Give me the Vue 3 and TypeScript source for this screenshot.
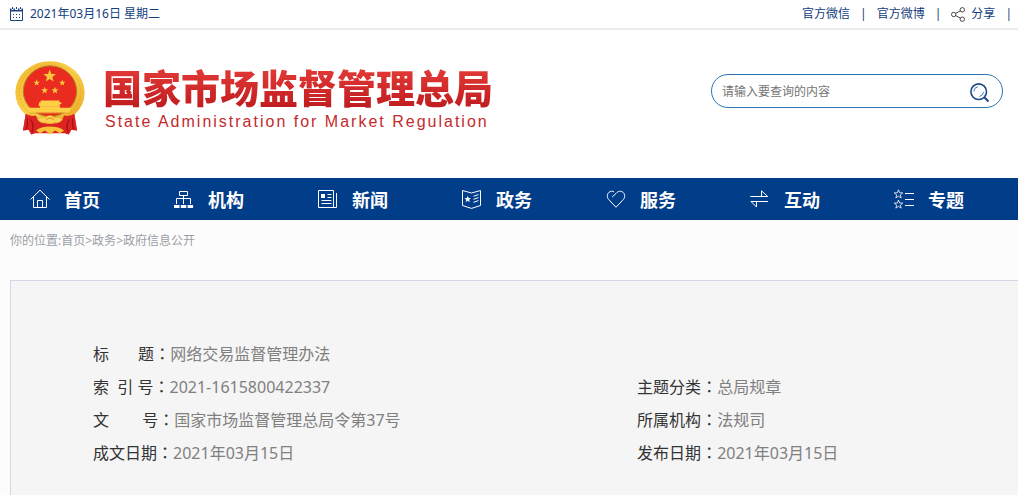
<script setup lang="ts">
import { ref } from 'vue'

interface NavItem {
  label: string
  icon: string
}

interface Field {
  label: string
  value: string
  wide?: boolean
}

const keyword = ref('')

const navItems: NavItem[] = [
  { label: '首页', icon: 'home' },
  { label: '机构', icon: 'org' },
  { label: '新闻', icon: 'news' },
  { label: '政务', icon: 'affairs' },
  { label: '服务', icon: 'service' },
  { label: '互动', icon: 'interact' },
  { label: '专题', icon: 'topics' },
]

const gap = (n: number): string => '\u00a0'.repeat(n)

const fields: Field[] = [
  { label: `标${gap(7)}题`, value: '网络交易监督管理办法', wide: true },
  { label: `索${gap(2)}引${gap(1)}号`, value: '2021-1615800422337' },
  { label: '主题分类', value: '总局规章' },
  { label: `文${gap(8)}号`, value: '国家市场监督管理总局令第37号' },
  { label: '所属机构', value: '法规司' },
  { label: '成文日期', value: '2021年03月15日' },
  { label: '发布日期', value: '2021年03月15日' },
]

function star(cx: number, cy: number, r: number): string {
  const pts: string[] = []
  for (let i = 0; i < 10; i++) {
    const a = -Math.PI / 2 + (i * Math.PI) / 5
    const d = i % 2 ? r * 0.42 : r
    pts.push(`${(cx + d * Math.cos(a)).toFixed(2)},${(cy + d * Math.sin(a)).toFixed(2)}`)
  }
  return pts.join(' ')
}
</script>

<template>
  <div class="page">
    <div class="topbar">
      <div class="date">
        <svg width="14" height="14" viewBox="0 0 14 14" aria-hidden="true">
          <path d="M.5 2.500V13.500H12.500V2.500" fill="none" stroke="#1c4480" />
          <path d="M0 1.500H1.500V3H3.500V1.500H5V3H8V1.500H9.500V3H11.500V1.500H13V4.500H0Z" fill="#1c4480" />
          <path d="M2.500 0V2M6.500 0V2M10.500 0V2" stroke="#1c4480" />
          <path d="M3 7.500H11M3 10.500H11" stroke="#1c4480" stroke-dasharray="1 2" />
        </svg>
        <span>2021年03月16日 星期二</span>
      </div>
      <div class="links">
        <a href="#">官方微信</a>
        <span>|</span>
        <a href="#">官方微博</a>
        <span>|</span>
        <a href="#" class="share">
          <svg width="14" height="15" viewBox="0 0 14 15" fill="none" stroke="#444" aria-hidden="true">
            <circle cx="2.700" cy="7.500" r="2.200" />
            <circle cx="11.300" cy="2.800" r="2.200" />
            <circle cx="11.300" cy="12.200" r="2.200" />
            <path d="M4.700 6.400L9.300 3.900M4.700 8.600L9.300 11.100" />
          </svg>
          分享
        </a>
        <span>|</span>
      </div>
    </div>

    <header class="header">
      <a href="#" class="brand">
        <svg class="emblem" viewBox="45 30 210 225" aria-hidden="true">
          <defs>
            <linearGradient id="gold" x1="0" y1="0" x2="1" y2="1">
              <stop offset="0" stop-color="#f0b62c" />
              <stop offset=".5" stop-color="#fad04a" />
              <stop offset="1" stop-color="#e8a51e" />
            </linearGradient>
          </defs>
          <path d="M77 192L69 240L86 238L94 252L104 248H196L206 252L214 238L231 240L223 192Z" fill="#dc2423" />
          <ellipse cx="150" cy="126" rx="104" ry="94" fill="url(#gold)" />
          <ellipse cx="150" cy="125" rx="92" ry="84" fill="none" stroke="#e6ab2a" stroke-width="3" stroke-dasharray="5 6" />
          <ellipse cx="150" cy="122" rx="80" ry="76" fill="#ea2b20" stroke="#b58324" stroke-width="3" />
          <polygon :points="star(149, 77, 20)" fill="#fac83c" />
          <polygon :points="star(110, 97, 10)" fill="#fac83c" />
          <polygon :points="star(187, 97, 10)" fill="#fac83c" />
          <polygon :points="star(134, 120, 11)" fill="#fac83c" />
          <polygon :points="star(165, 120, 11)" fill="#fac83c" />
          <path d="M122 150H178V155H184V161H179V167H116V161H117V155H122Z" fill="#fdcf45" />
          <path d="M86 172H214L207 187H93Z" fill="#fdcf45" />
          <path d="M120 167H180V173H120Z" fill="#fdcf45" />
          <path d="M88 188H212" stroke="#df9c27" stroke-width="2" />
          <path d="M77 190Q92 199 108 195Q112 212 132 222Q112 228 104 248L94 252L86 238L69 240Z" fill="#dc2423" />
          <path d="M223 190Q208 199 192 195Q188 212 168 222Q188 228 196 248L206 252L214 238L231 240Z" fill="#dc2423" />
          <path d="M82 204Q84 222 79 236M93 207Q103 226 96 245M218 204Q216 222 221 236M207 207Q197 226 204 245" fill="none" stroke="#a90f16" stroke-width="4" />
          <path d="M108 240Q122 228 150 228Q178 228 192 240L180 248L165 240L150 252L135 240L120 248Z" fill="#f8c236" />
          <path d="M112 207Q122 197 136 202Q150 186 164 202Q178 197 188 207Q180 218 165 215Q150 224 135 215Q120 218 112 207Z" fill="#fdd250" stroke="#d98b1c" stroke-width="1" />
          <path d="M138 209Q150 196 162 209" fill="none" stroke="#d98b1c" stroke-width="3" />
        </svg>
        <span class="names">
          <span class="cn">国家市场监督管理总局</span>
          <span class="en">State Administration for Market Regulation</span>
        </span>
      </a>
      <form class="search" @submit.prevent>
        <input v-model="keyword" type="text" placeholder="请输入要查询的内容" aria-label="请输入要查询的内容" />
        <button type="submit" aria-label="搜索">
          <svg width="20" height="20" viewBox="0 0 20 20" fill="none" stroke="#1d4886" aria-hidden="true">
            <circle cx="8.700" cy="8.700" r="7.800" stroke-width="1.600" />
            <path d="M14.300 14.300L18.500 18.500" stroke-width="2" />
            <path d="M3.800 8.500Q4 4.500 8 3.700M13.500 9Q13 12.700 9.500 13.500" stroke="#4b83bd" />
          </svg>
        </button>
      </form>
    </header>

    <nav class="nav">
      <a v-for="item in navItems" :key="item.label" href="#">
        <svg width="20" height="20" viewBox="0 0 20 20" fill="none" stroke="#fff" aria-hidden="true">
          <path v-if="item.icon === 'home'" d="M.5 10.500L10 1.200L19.500 10.500M3.500 8V18.500H16.500V8M7.500 18.500V11.500H12.500V18.500" />
          <g v-else-if="item.icon === 'org'">
            <path d="M5.500 2.500H13.500V6.500H5.500ZM9.500 6.500V15M2.500 15V9.500H16.500V15" />
            <path d="M0 16H5.500V19H0ZM6.800 16H12.300V19H6.800ZM13.600 16H19.100V19H13.600Z" fill="#fff" stroke="none" />
          </g>
          <g v-else-if="item.icon === 'news'">
            <path d="M.5 1.500H15.500V18.500H.5ZM15.500 18.500H18.500V4M9.500 5.500H13.500M9.500 8.500H13.500M3.500 11.500H13.500M3.500 14.500H13.500" />
            <path d="M3 5H7V9H3Z" fill="#fff" stroke="none" />
          </g>
          <g v-else-if="item.icon === 'affairs'">
            <path d="M.5 1.500L9.500 4L18.500 1.500V16.500L9.500 19.400L.5 16.500ZM11.500 7.300L16.500 5.600M11.500 10.300L16.500 8.600M11.500 13.300L16.500 11.600" />
            <polygon :points="star(5.700, 10.300, 3.500)" fill="#fff" stroke="none" />
          </g>
          <path v-else-if="item.icon === 'service'" d="M6.200 8L10.200 4.300C12 2 15 1.600 17 3.300C19.200 5.200 19.200 8.300 17.300 10.500L10 18.300L2.700 10.500C.8 8.300.8 5.200 3 3.300C4.500 2 6.500 1.900 8 2.900" />
          <path v-else-if="item.icon === 'interact'" d="M.3 7.500H17.700L11.500 1.800V7.500M18 12.500H1L6.500 18V12.500" />
          <g v-else>
            <polygon :points="star(4.500, 5.300, 4.500)" stroke-width=".8" />
            <polygon :points="star(4.500, 15.500, 4.500)" stroke-width=".8" />
            <path d="M11 4.500H20M11 10.500H20M11 16.500H20" />
          </g>
        </svg>
        <span>{{ item.label }}</span>
      </a>
    </nav>

    <div class="crumbs">
      你的位置:<a href="#">首页</a>&gt;<a href="#">政务</a>&gt;<a href="#">政府信息公开</a>
    </div>

    <main class="info">
      <dl>
        <div v-for="f in fields" :key="f.label" :class="{ wide: f.wide }">
          <dt>{{ f.label }}<span class="colon">：</span></dt>
          <dd>{{ f.value }}</dd>
        </div>
      </dl>
    </main>
  </div>
</template>

<style>
body {
  margin: 0;
  background: #fcfcfc;
}
</style>

<style scoped>
.page {
  font-family: "Noto Sans", "Noto Sans CJK SC", sans-serif;
  font-size: 12px;
  color: #123e7c;
  overflow: hidden;
}

a {
  color: inherit;
  text-decoration: none;
}

svg {
  display: block;
  flex: none;
}

.topbar {
  display: flex;
  justify-content: space-between;
  height: 28px;
  padding: 0 6px 0 10px;
  line-height: 28px;
  background: #fff;
  border-bottom: 2px solid #ececec;
}

.date,
.links,
.share {
  display: flex;
  align-items: center;
}

.date {
  gap: 6px;
}

.links {
  gap: 10px;
}

.share {
  gap: 6px;
}

.header {
  display: flex;
  justify-content: space-between;
  align-items: flex-start;
  padding: 30px 15px 42px;
  background: #fff;
}

.brand {
  display: flex;
  gap: 18px;
  color: #c52a2c;
}

.emblem {
  width: 70px;
  height: 76px;
}

.names {
  display: flex;
  flex-direction: column;
  padding-top: 8px;
  white-space: nowrap;
}

.cn {
  font-size: 39px;
  line-height: 40px;
  font-weight: 900;
  background: linear-gradient(#e23a36, #c01c20);
  background-clip: text;
  color: transparent;
}

.en {
  padding-left: 2px;
  font-family: "Liberation Sans", Arial, sans-serif;
  font-size: 16px;
  line-height: 28px;
  letter-spacing: 2px;
}

.search {
  display: flex;
  align-items: center;
  box-sizing: border-box;
  width: 292px;
  height: 34px;
  margin-top: 14px;
  padding: 0 12px 0 10px;
  border: 1px solid #2d74b2;
  border-radius: 17px;
}

.search input {
  flex: 1;
  min-width: 0;
  padding: 0;
  border: 0;
  outline: 0;
  background: none;
  font: inherit;
  color: #333;
}

.search input::placeholder {
  color: #757575;
  opacity: 1;
}

.search button {
  padding: 3px 0 0;
  border: 0;
  background: none;
}

.nav {
  display: flex;
  height: 42px;
  background: #023d8a;
  color: #fff;
}

.nav a {
  display: flex;
  align-items: center;
  gap: 14px;
  box-sizing: border-box;
  width: 144px;
  padding-left: 30px;
  font-size: 18px;
  font-weight: 700;
}

.crumbs {
  padding: 11px 10px 9px;
  line-height: 20px;
  color: #9b9ea6;
}

.info {
  margin: 20px 0 0 10px;
  padding: 57px 0 25px 82px;
  background: #f5f5f5;
  border: solid #d3d6e4;
  border-width: 1px 0 0 1px;
}

dl {
  display: grid;
  grid-template-columns: 10fr 7fr;
  margin: 0;
  font-size: 16px;
  line-height: 33px;
}

dl > div {
  display: flex;
}

.wide {
  grid-column: 1 / -1;
}

dt {
  color: #333;
}

dd {
  margin: 0;
  color: #808080;
}

.colon {
  font-family: "Noto Sans CJK TC", sans-serif;
  line-height: 1;
}
</style>
